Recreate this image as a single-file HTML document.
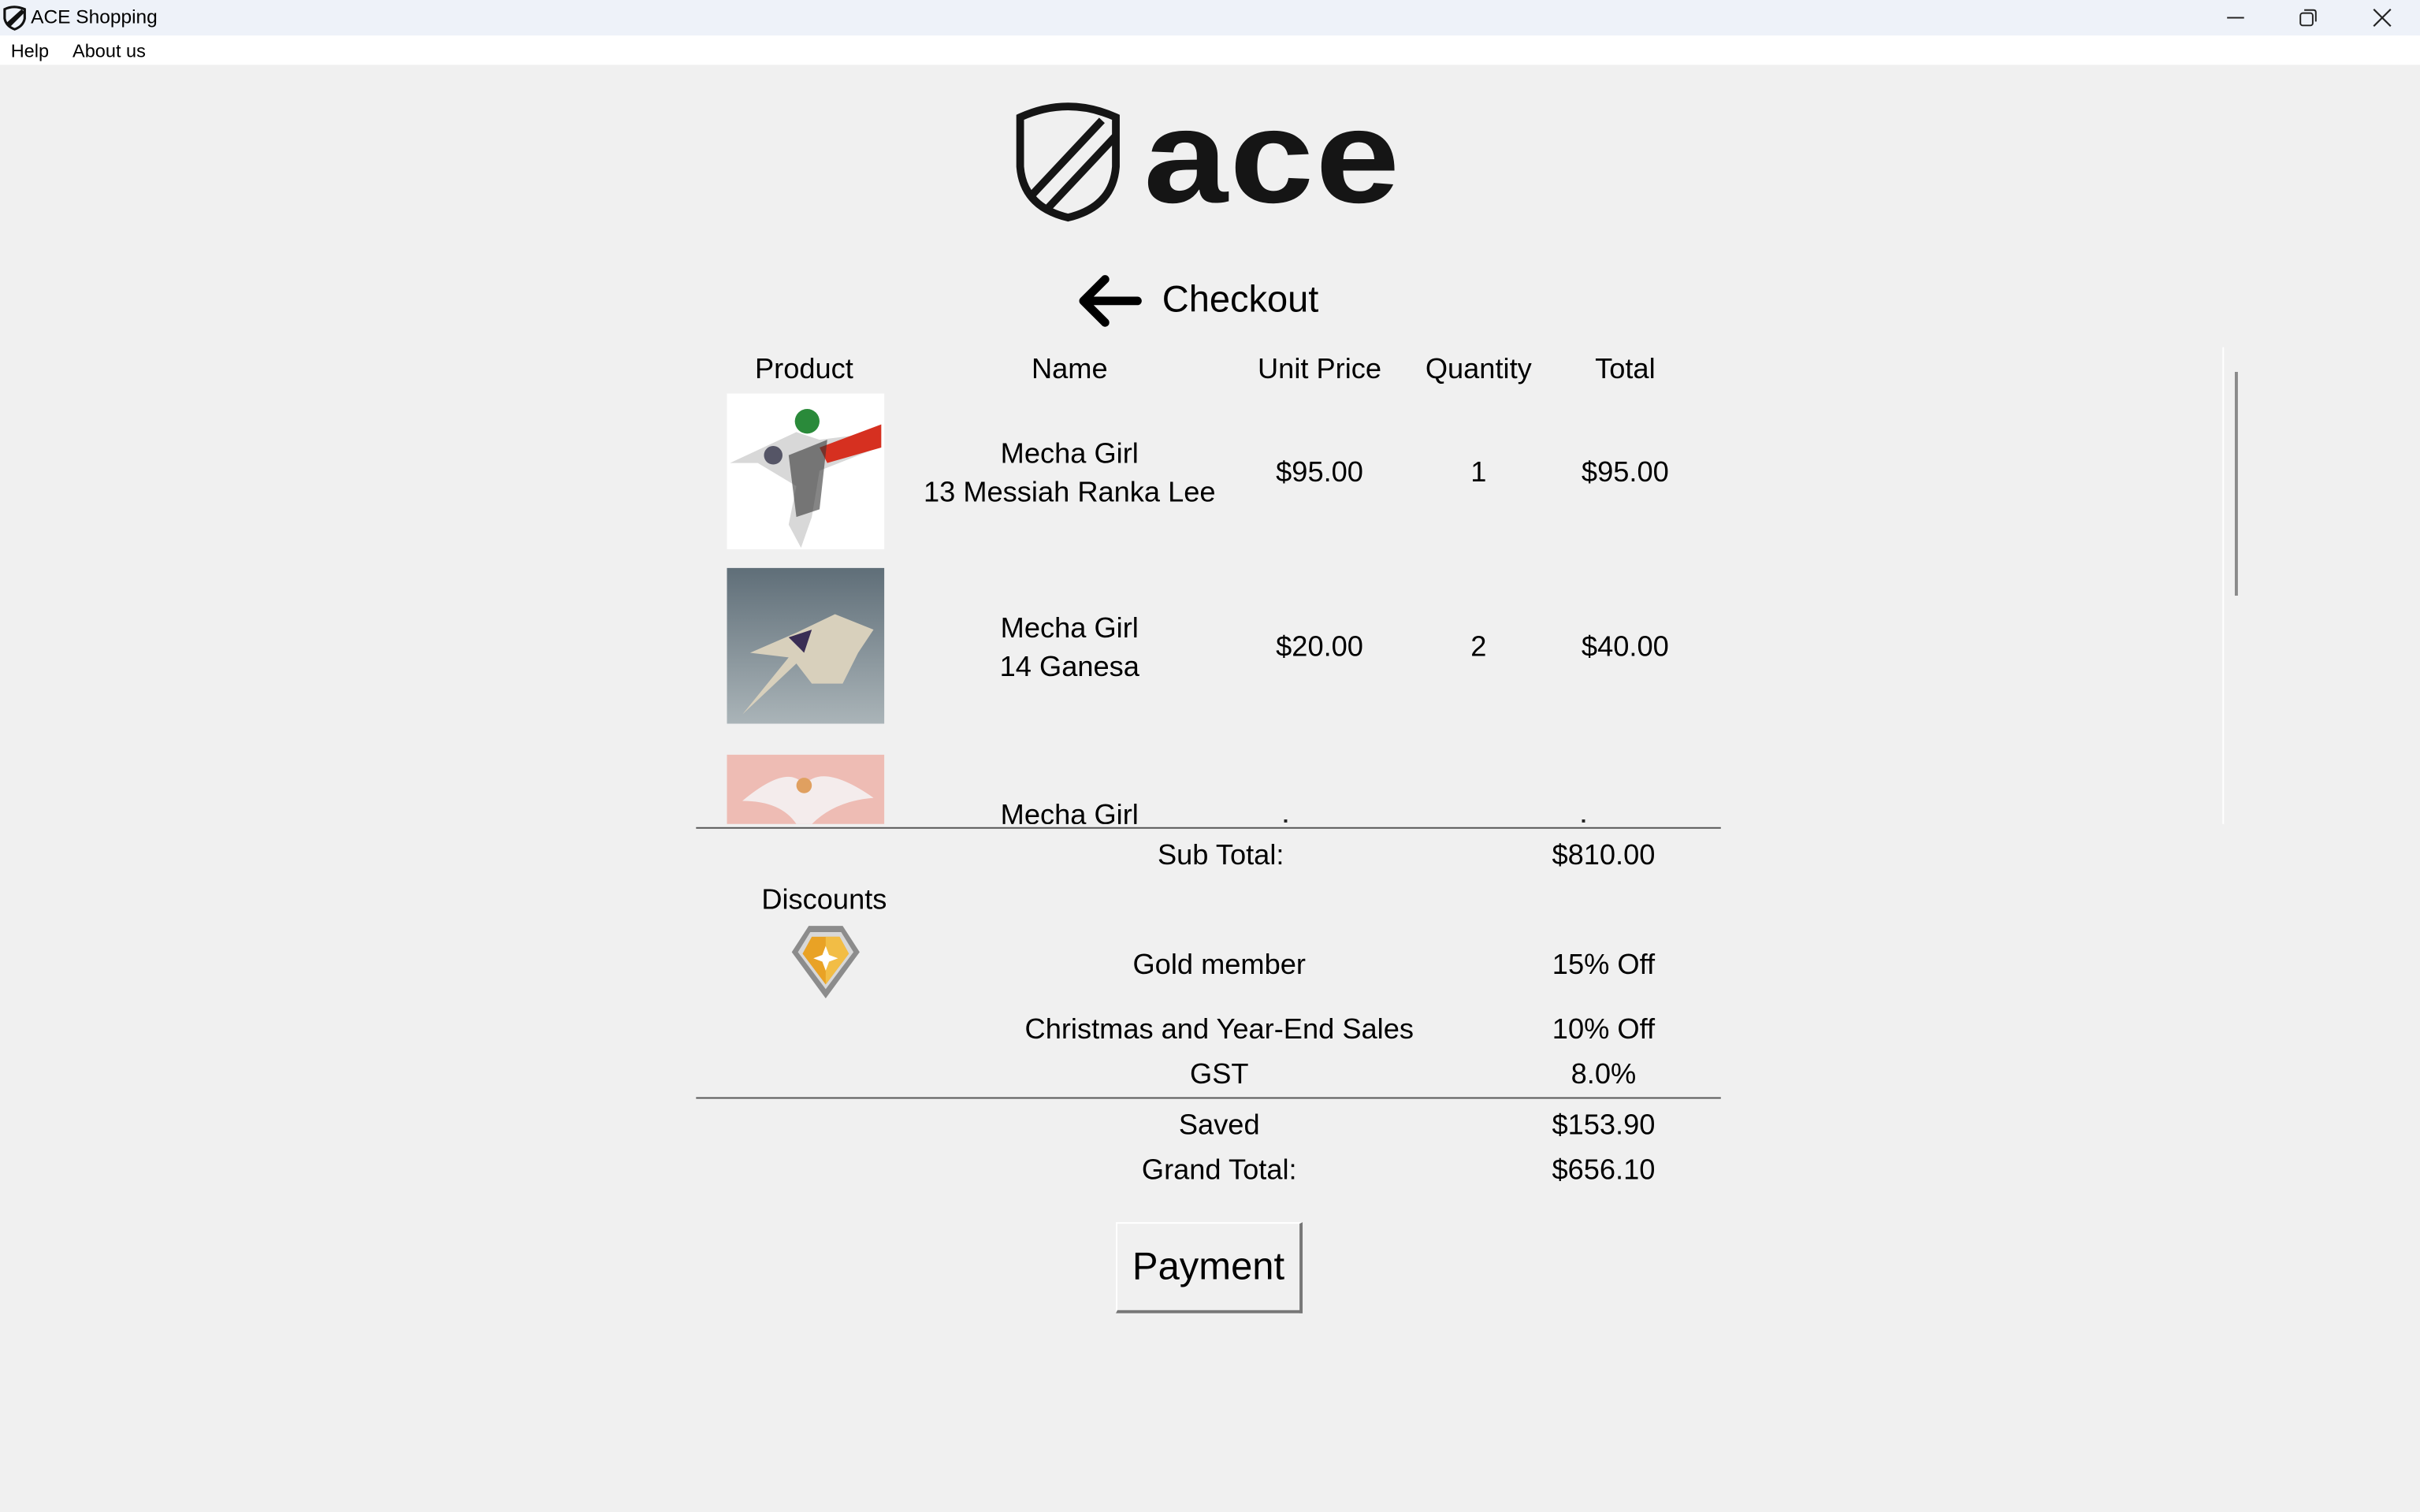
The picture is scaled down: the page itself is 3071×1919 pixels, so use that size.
<!DOCTYPE html>
<html><head><meta charset="utf-8"><style>
html,body{margin:0;padding:0;width:3071px;height:1919px;overflow:hidden;background:#f0f0f0}
#w{position:absolute;left:0;top:0;width:1568px;height:980px;transform:scale(1.95855);transform-origin:0 0;font-family:"Liberation Sans","DejaVu Sans",sans-serif;color:#000}
.c{position:absolute;transform:translateX(-50%);white-space:nowrap;text-align:center;font-size:18.5px;line-height:25px}
.abs{position:absolute}
</style></head><body><div id="w">
<div class="abs" style="left:0;top:0;width:1568px;height:23px;background:#eef2f9"></div>
<svg class="abs" style="left:1px;top:3px" width="17" height="17" viewBox="0 0 17 17"><path d="M2 3 Q8 0 15 3 L15 9 Q14 14 8.5 16 Q3 14 2 9Z" fill="none" stroke="#111" stroke-width="1.6"/><path d="M3 12 L13 3 L15 5 L6 14Z" fill="#111"/></svg>
<div class="abs" style="left:20px;top:4px;font-size:12.5px">ACE Shopping</div>
<div class="abs" style="left:1443px;top:11px;width:11px;height:1px;background:#222"></div>
<svg class="abs" style="left:1489px;top:5px" width="13" height="13"><rect x="1.5" y="3.5" width="8" height="8" rx="1.5" fill="none" stroke="#222"/><path d="M4 1.5 H10 Q11.5 1.5 11.5 3 V9" fill="none" stroke="#222"/></svg>
<svg class="abs" style="left:1537px;top:5px" width="13" height="13"><path d="M1 1 L12 12 M12 1 L1 12" stroke="#222" stroke-width="1.1"/></svg>
<div class="abs" style="left:0;top:23px;width:1568px;height:19px;background:#fff"></div>
<div class="abs" style="left:7px;top:26px;font-size:12px">Help</div>
<div class="abs" style="left:47px;top:26px;font-size:12px">About us</div>

<svg class="abs" style="left:655px;top:64px" width="74" height="82" viewBox="0 0 74 82"><path d="M6 12 Q37 -2 68 12 L68 44 Q66 70 37 77 Q8 70 6 44Z" fill="none" stroke="#151515" stroke-width="5"/><path d="M14 62 L59 14 M22 73 L68 24" stroke="#151515" stroke-width="5"/></svg>
<div class="abs" style="left:741px;top:52px;font-size:86px;font-weight:bold;letter-spacing:1px;color:#151515;line-height:100px;transform:scaleX(1.14);transform-origin:0 0">ace</div>

<svg class="abs" style="left:697px;top:176px" width="46" height="38"><path d="M40 19 H6 M19 5 L5 19 L19 33" fill="none" stroke="#000" stroke-width="5.5" stroke-linecap="round" stroke-linejoin="round"/></svg>
<div class="abs" style="left:753px;top:180px;font-size:24px;line-height:30px">Checkout</div>

<div class="c" style="left:521px;top:226px">Product</div>
<div class="c" style="left:693px;top:226px">Name</div>
<div class="c" style="left:855px;top:226px">Unit Price</div>
<div class="c" style="left:958px;top:226px">Quantity</div>
<div class="c" style="left:1053px;top:226px">Total</div>

<svg class="abs" style="left:471px;top:255px" width="102" height="101"><rect width="102" height="101" fill="#fff"/><path d="M2 45 L45 25 L60 30 L100 25 L98 35 L60 50 L55 80 L48 100 L40 85 L45 60 L20 45Z" fill="#d8d8d8"/><path d="M60 35 L100 20 L100 35 L65 45Z" fill="#d63020"/><circle cx="30" cy="40" r="6" fill="#556"/><path d="M40 40 L65 30 L60 75 L45 80Z" fill="#333" opacity=".6"/><circle cx="52" cy="18" r="8" fill="#2a8a3a"/></svg>
<svg class="abs" style="left:471px;top:368px" width="102" height="101"><defs><linearGradient id="g2" x1="0" y1="0" x2="0" y2="1"><stop offset="0" stop-color="#5f6e78"/><stop offset="1" stop-color="#aab4b8"/></linearGradient></defs><rect width="102" height="101" fill="url(#g2)"/><path d="M15 55 L45 42 L70 30 L95 40 L85 55 L75 75 L55 75 L45 62 L10 95 L40 58Z" fill="#d8d0bc"/><path d="M40 45 L55 40 L50 55Z" fill="#3a2e55"/></svg>
<svg class="abs" style="left:471px;top:489px" width="102" height="45"><rect width="102" height="45" fill="#eebcb4"/><path d="M10 30 Q40 5 50 20 Q62 5 95 28 Q70 30 55 45 L45 45 Q35 30 10 30Z" fill="#f4ecec"/><circle cx="50" cy="20" r="5" fill="#e0a060"/></svg>

<div class="c" style="left:693px;top:281px">Mecha Girl</div>
<div class="c" style="left:693px;top:306px">13 Messiah Ranka Lee</div>
<div class="c" style="left:855px;top:293px">$95.00</div>
<div class="c" style="left:958px;top:293px">1</div>
<div class="c" style="left:1053px;top:293px">$95.00</div>

<div class="c" style="left:693px;top:394px">Mecha Girl</div>
<div class="c" style="left:693px;top:419px">14 Ganesa</div>
<div class="c" style="left:855px;top:406px">$20.00</div>
<div class="c" style="left:958px;top:406px">2</div>
<div class="c" style="left:1053px;top:406px">$40.00</div>

<div class="abs" style="left:600px;top:515px;width:200px;height:19px;overflow:hidden"><div class="c" style="left:93px;top:0">Mecha Girl</div></div>
<div class="abs" style="left:832px;top:531px;width:2px;height:2px;background:#222"></div>
<div class="abs" style="left:1025px;top:531px;width:2px;height:2px;background:#222"></div>

<div class="abs" style="left:1440px;top:225px;width:1px;height:309px;background:#fff"></div>
<div class="abs" style="left:1448px;top:241px;width:2px;height:145px;background:#8a8a8a"></div>

<div class="abs" style="left:451px;top:536px;width:664px;height:1px;background:#555"></div>
<div class="c" style="left:791px;top:541px">Sub Total:</div>
<div class="c" style="left:1039px;top:541px">$810.00</div>
<div class="c" style="left:534px;top:570px">Discounts</div>
<svg class="abs" style="left:510px;top:597px" width="50" height="54" viewBox="0 0 50 54"><path d="M14 3 H36 L47 20 L25 50 L3 20Z" fill="#8c8c8c"/><path d="M15 7 H35 L43 20 L25 44 L7 20Z" fill="#d8d8d8"/><path d="M16 10 H34 L40 21 L25 41 L10 21Z" fill="#e9a225"/><path d="M25 10 H34 L40 21 L25 41Z" fill="#f2bd45"/><path d="M25 16 L28 24 L25 32 L22 24Z M17 24 L25 21 L33 24 L25 27Z" fill="#fff"/></svg>
<div class="c" style="left:790px;top:612px">Gold member</div>
<div class="c" style="left:1039px;top:612px">15% Off</div>
<div class="c" style="left:790px;top:654px">Christmas and Year-End Sales</div>
<div class="c" style="left:1039px;top:654px">10% Off</div>
<div class="c" style="left:790px;top:683px">GST</div>
<div class="c" style="left:1039px;top:683px">8.0%</div>
<div class="abs" style="left:451px;top:711px;width:664px;height:1px;background:#555"></div>
<div class="c" style="left:790px;top:716px">Saved</div>
<div class="c" style="left:1039px;top:716px">$153.90</div>
<div class="c" style="left:790px;top:745px">Grand Total:</div>
<div class="c" style="left:1039px;top:745px">$656.10</div>

<div class="abs" style="left:723px;top:792px;background:#f0f0f0;border-top:1px solid #fff;border-left:1px solid #fff;border-right:2px solid #777;border-bottom:2px solid #777;box-sizing:border-box;width:121px;height:59px"></div>
<div class="c" style="left:783px;top:806px;font-size:25px;line-height:30px">Payment</div>
</div></body></html>
